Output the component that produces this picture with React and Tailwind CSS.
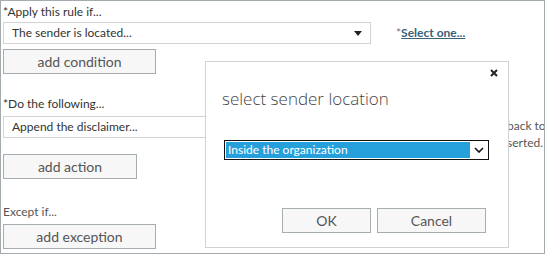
import React from "react";

const font = { fontFamily: 'Lato, "Noto Sans", Arial, sans-serif' };
const titleFont = { fontFamily: '"Open Sans", "Noto Sans", Arial, sans-serif' };

function Btn({ children, w }) {
  return (
    <button
      className={`h-[25px] ${w} border border-[#a6adb0] bg-[#f7f7f7] text-[14px] leading-[20px] text-[#555] flex items-center justify-center`}
    >
      {children}
    </button>
  );
}

export default function App() {
  return (
    <div className="bg-white w-[546px] h-[255px]" style={font}>
      <div className="relative w-[545px] h-[254px] border border-[#a3abae] overflow-hidden pl-[2px] pt-[2px]">
        <div className="text-[12px] leading-[17px] text-[#333]">*Apply this rule if...</div>
        <div className="flex items-center mt-[2px] h-[22px]">
          <div className="w-[368px] h-[22px] border border-[#d2d2d2] flex items-center justify-between pl-[8px] pr-[8px] text-[12px] text-[#333]">
            <span>The sender is located...</span>
            <svg width="8" height="5" viewBox="0 0 8 5"><path d="M0 0h8L4 5z" fill="#222" /></svg>
          </div>
          <div className="ml-[25px] text-[12px] leading-[16px]">
            <span className="text-[#777]">*</span>
            <span className="font-bold text-[#3a5f78] underline">Select one...</span>
          </div>
        </div>
        <div className="mt-[5px]">
          <Btn w="w-[153px]">add condition</Btn>
        </div>
        <div className="mt-[21px] text-[12px] leading-[17px] text-[#333]">*Do the following...</div>
        <div className="flex mt-[4px] h-[22px]">
          <div className="w-[368px] h-[22px] border border-[#d2d2d2] flex items-center pl-[8px] text-[12px] text-[#333] shrink-0">
            Append the disclaimer...
          </div>
          <div className="ml-[136px] mt-[1px] text-[12px] leading-[17px] text-[#555] whitespace-nowrap">
            <div>back to</div>
            <div>serted.</div>
          </div>
        </div>
        <div className="mt-[16px]">
          <Btn w="w-[134px]">add action</Btn>
        </div>
        <div className="mt-[24px] text-[12px] leading-[17px] text-[#555]">Except if...</div>
        <div className="mt-[4px]">
          <Btn w="w-[153px]">add exception</Btn>
        </div>

        <div className="absolute left-[204px] top-[60px] w-[304px] h-[187px] bg-white border border-[#cfd3d5] flex flex-col">
          <div className="flex justify-end pr-[10px] pt-[7px] h-[20px]">
            <svg width="8" height="8" viewBox="0 0 8 8">
              <path d="M1 1L7 7M7 1L1 7" stroke="#222" strokeWidth="2" />
            </svg>
          </div>
          <div className="pl-[16px] mt-[5px] text-[17px] leading-[24px] text-[#444] font-light" style={titleFont}>
            select sender location
          </div>
          <div className="ml-[18px] mt-[29px] w-[265px] h-[20px] border border-[#111] flex items-stretch p-[1px]">
            <div className="flex-1 bg-[#26a0da] text-white text-[12px] leading-[16px] pl-[2px] flex items-center">
              Inside the organization
            </div>
            <div className="w-[17px] flex items-center justify-center">
              <svg width="10" height="6" viewBox="0 0 10 6">
                <path d="M1 1L5 5L9 1" stroke="#111" strokeWidth="1.6" fill="none" />
              </svg>
            </div>
          </div>
          <div className="flex justify-end gap-[6px] pr-[22px] mt-[48px]">
            <Btn w="w-[89px]">OK</Btn>
            <Btn w="w-[109px]">Cancel</Btn>
          </div>
        </div>
      </div>
    </div>
  );
}
